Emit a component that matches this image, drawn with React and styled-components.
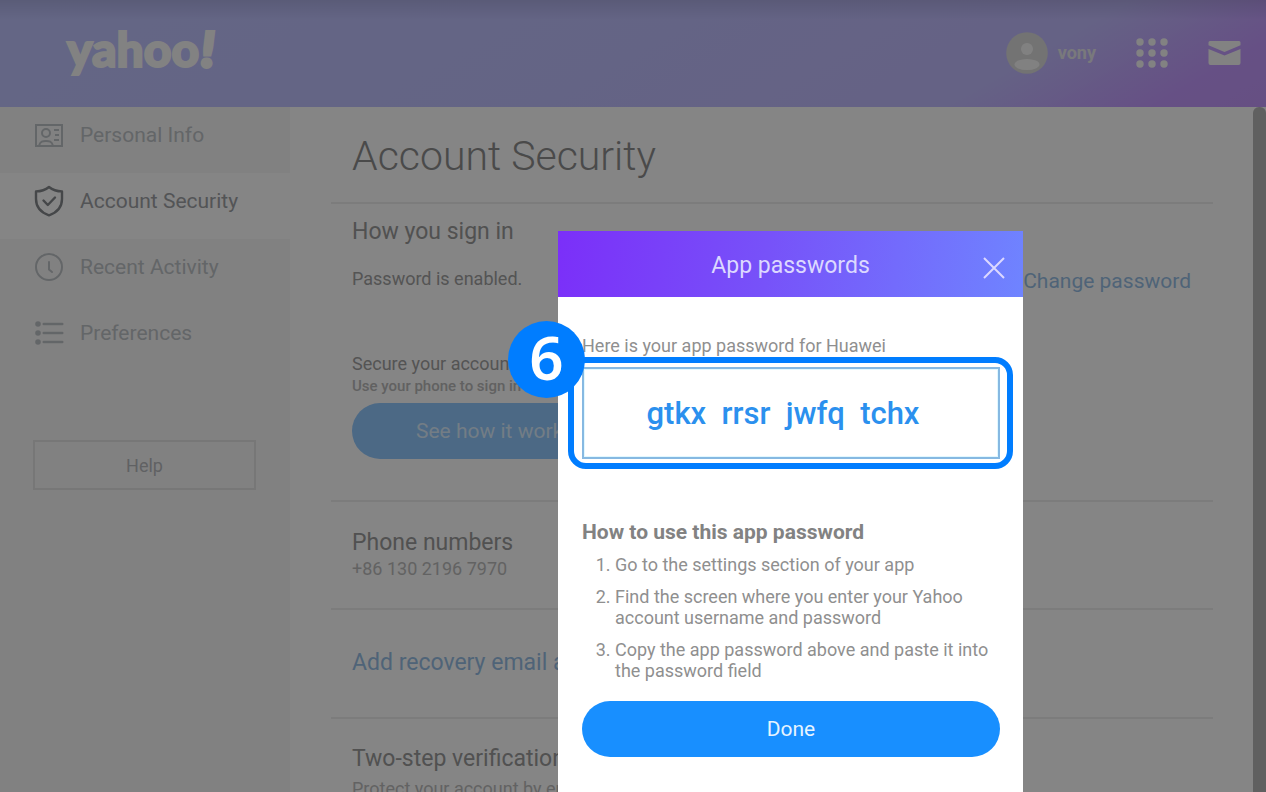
import styled, { createGlobalStyle } from 'styled-components';

const GlobalStyle = createGlobalStyle`
  * {
    box-sizing: border-box;
  }

  body {
    margin: 0;
    height: 100vh;
    overflow: hidden;
    font-family: Roboto, 'Liberation Sans', sans-serif;
    background-color: #ffffff;
  }

  h1, h2, h3, p, ol {
    margin: 0;
    font-weight: 400;
  }

  a {
    text-decoration: none;
  }

  button, input {
    font-family: inherit;
  }
`;

const Page = styled.div`
  height: 100vh;
  display: flex;
  flex-direction: column;
  overflow: hidden;
`;

const Header = styled.header`
  flex: none;
  height: 107px;
  padding: 0 25px 2px 67px;
  display: flex;
  align-items: center;
  justify-content: space-between;
  background:
    linear-gradient(180deg, rgb(0, 0, 0, 0.1) 0px, rgb(0, 0, 0, 0) 20px),
    linear-gradient(150deg, #c0c4ff 0%, #c0c0ff 50%, #c2bcff 78%, #c39aff 92%, #c398fb 100%);
`;

const Logo = styled.a`
  padding-bottom: 8px;
  color: #fafafa;
  font-family: Lato, sans-serif;
  font-size: 48px;
  font-weight: 900;
  line-height: 56px;
  -webkit-text-stroke: 2px #fafafa;

  em {
    margin-left: 2px;
    -webkit-text-stroke: 4px #fafafa;
  }
`;

const HeaderNav = styled.nav`
  display: flex;
  align-items: center;
  gap: 40px;
`;

const Profile = styled.a`
  display: flex;
  align-items: center;
  gap: 10px;
  color: #e8e8ee;
  font-size: 18px;
  font-weight: 700;
`;

const IconLink = styled.a`
  display: flex;
  color: #fafafa;
`;

const Columns = styled.div`
  flex: 1;
  min-height: 0;
  display: flex;
`;

const Sidebar = styled.aside`
  flex: none;
  width: 290px;
  display: flex;
  flex-direction: column;
  background-color: #f8f8f8;
`;

const SideLink = styled.a`
  height: 66px;
  padding: 0 0 10px 34px;
  display: flex;
  align-items: center;
  gap: 16px;
  font-size: 21px;
  color: ${(props) => (props.$active ? '#a0a2a6' : '#bfc3c7')};
  background-color: ${(props) => (props.$active ? '#ffffff' : 'transparent')};

  svg {
    color: ${(props) => (props.$active ? '#85888c' : '#bfc3c7')};
  }
`;

const HelpButton = styled.button`
  height: 50px;
  margin: 69px 34px 0 33px;
  border: 2px solid #e4e4e4;
  background: none;
  color: #b8bbbe;
  font-size: 18px;
`;

const Main = styled.main`
  flex: 1;
  min-width: 0;
  padding: 0 40px 0 41px;
  overflow: hidden;
`;

const Title = styled.h1`
  height: 97px;
  padding-left: 21px;
  border-bottom: 2px solid #eeeeee;
  color: #8e8e8e;
  font-size: 41px;
  font-weight: 300;
  line-height: 98px;
`;

const Section = styled.section`
  min-height: ${(props) => props.$height};
  padding: ${(props) => props.$top} 22px 0 21px;
  border-bottom: 2px solid #eeeeee;
`;

const SectionTitle = styled.h2`
  color: #9b9b9b;
  font-size: 23px;
  line-height: 28px;
`;

const Row = styled.div`
  margin: 21px 0 57px;
  display: flex;
  align-items: flex-start;
  justify-content: space-between;
`;

const Text = styled.p`
  color: ${(props) => (props.$faint ? '#bdbdbd' : '#a2a2a2')};
  font-size: 18px;
  line-height: 24px;
`;

const Note = styled(Text)`
  margin-top: 4px;
`;

const SmallText = styled.p`
  color: #bababa;
  font-size: 15px;
  font-weight: 500;
  line-height: 20px;
`;

const TextLink = styled.a`
  color: #98bfe6;
  font-size: ${(props) => (props.$large ? '23px' : '21px')};
  line-height: 28px;
`;

const HowButton = styled.button`
  height: 56px;
  margin-top: 7px;
  padding: 0 64px;
  border: 0;
  border-radius: 28px;
  background-color: #92c9ff;
  color: #dcefff;
  font-size: 21px;
`;

const ScrollTrack = styled.div`
  flex: none;
  width: 13px;
  border-radius: 6px 6px 0 0;
  background-color: #b9b9b9;
`;

const Overlay = styled.div`
  position: fixed;
  inset: 0;
  padding: 231px 0 0 315px;
  display: flex;
  justify-content: center;
  background-color: rgb(0, 0, 0, 0.48);
`;

const Dialog = styled.div`
  position: relative;
  width: 465px;
  background-color: #ffffff;
`;

const DialogHeader = styled.header`
  height: 66px;
  padding: 4px 18px 0;
  display: grid;
  grid-template-columns: 22px 1fr 22px;
  align-items: center;
  background: linear-gradient(98deg, #7b2ff9 0%, #7752f9 45%, #6f84ff 100%);
  color: #dcd8ff;
`;

const DialogTitle = styled.h2`
  grid-column: 2;
  font-size: 23px;
  line-height: 28px;
  text-align: center;
`;

const CloseButton = styled.button`
  padding: 4px 0 0;
  border: 0;
  display: flex;
  background: none;
  color: inherit;
`;

const DialogBody = styled.div`
  padding: 38px 23px 0 24px;
  color: #8f8f8f;
  font-size: 18px;
  line-height: 21px;
`;

const PasswordInput = styled.input`
  display: block;
  width: 100%;
  height: 92px;
  margin: 11px 0 61px;
  padding: 0 16px 0 0;
  border: 2px solid #86b9e2;
  box-shadow: inset 0 0 0 1px #e2f8ff;
  outline: 0;
  color: #2b90ee;
  font-size: 31px;
  font-weight: 500;
  text-align: center;
`;

const StepsTitle = styled.h3`
  color: #828282;
  font-size: 21px;
  font-weight: 700;
  line-height: 24px;
`;

const Steps = styled.ol`
  margin: 10px 0 20px;
  padding-left: 33px;
  display: flex;
  flex-direction: column;
  gap: 11px;
`;

const DoneButton = styled.button`
  width: 100%;
  height: 56px;
  border: 0;
  border-radius: 28px;
  background-color: #188fff;
  color: #e6f4ff;
  font-size: 21px;
`;

const Highlight = styled.div`
  position: absolute;
  top: 126px;
  left: 10px;
  right: 10px;
  height: 112px;
  border: 6px solid #007dff;
  border-radius: 18px;
  pointer-events: none;
`;

const StepBadge = styled.span`
  position: absolute;
  top: 90px;
  left: -50px;
  width: 77px;
  height: 77px;
  border-radius: 50%;
  display: flex;
  justify-content: center;
  background-color: #007dff;
  color: #ffffff;
  font-family: 'Noto Sans', 'Open Sans', sans-serif;
  font-size: 60px;
  font-weight: 600;
  line-height: 72px;
`;

const CardIcon = () => (
  <svg width='30' height='30' viewBox='0 0 30 30' fill='none' stroke='currentColor' strokeWidth='2'>
    <rect x='2' y='5' width='26' height='21' />
    <circle cx='12' cy='13' r='4' />
    <path d='M5 26c1-5 4-5 7-5s6 0 7 5M20 10h5M21 15h4M20 20h5' />
  </svg>
);

const ShieldIcon = () => (
  <svg width='30' height='32' viewBox='0 0 30 32' fill='none' stroke='currentColor' strokeWidth='2.4' strokeLinejoin='round' strokeLinecap='round'>
    <path d='M15 2c3.500 2.900 8 4.400 13 4.400v7.600c0 8-5 13.500-13 16.300C7 27.500 2 22 2 14V6.400C7 6.400 11.500 4.900 15 2z' />
    <path d='M9.500 15.500l4.300 4.500 7.200-7.500' />
  </svg>
);

const ClockIcon = () => (
  <svg width='30' height='30' viewBox='0 0 30 30' fill='none' stroke='currentColor' strokeWidth='2' strokeLinecap='round'>
    <circle cx='15' cy='15' r='13' />
    <path d='M15 10v7.500l3 2.500' />
  </svg>
);

const ListIcon = () => (
  <svg width='30' height='30' viewBox='0 0 30 30' fill='currentColor'>
    {[6, 15, 24].map((y) => (
      <g key={y}>
        <circle cx='4' cy={y} r='2.800' />
        <rect x='8.500' y={y - 1.2} width='21' height='2.400' rx='1.200' />
      </g>
    ))}
  </svg>
);

const AvatarIcon = () => (
  <svg width='42' height='42' viewBox='0 0 42 42'>
    <circle cx='21' cy='21' r='20.800' fill='#dcdcdc' />
    <circle cx='21' cy='17' r='6' fill='#f8f8f8' />
    <ellipse cx='21' cy='32.500' rx='12.500' ry='5.500' fill='#f8f8f8' />
  </svg>
);

const AppsIcon = () => (
  <svg width='32' height='30' viewBox='0 0 32 30' fill='currentColor'>
    {[4, 15, 26].map((y) =>
      [4, 16, 28].map((x) => <circle key={`${x}-${y}`} cx={x} cy={y} r='3.700' />)
    )}
  </svg>
);

const MailIcon = () => (
  <svg width='33' height='24' viewBox='0 0 33 24' fill='currentColor'>
    <path d='M2 0h29a1.500 1.500 0 0 1 1.500 1.500v2.700L16.500 11 .5 4.200V1.500A1.500 1.500 0 0 1 2 0z' />
    <path d='M.5 8l16 6.500 16-6.500v14a2 2 0 0 1-2 2h-28a2 2 0 0 1-2-2z' />
  </svg>
);

const CloseIcon = () => (
  <svg width='22' height='22' viewBox='0 0 22 22' fill='none' stroke='currentColor' strokeWidth='2'>
    <path d='M1 1l20 20M21 1L1 21' />
  </svg>
);

const App = () => {
  return (
    <>
      <GlobalStyle />
      <Page>
        <Header>
          <Logo href='#home'>
            yahoo<em>!</em>
          </Logo>
          <HeaderNav>
            <Profile href='#profile'>
              <AvatarIcon />
              vony
            </Profile>
            <IconLink href='#apps' aria-label='Apps'>
              <AppsIcon />
            </IconLink>
            <IconLink href='#mail' aria-label='Mail'>
              <MailIcon />
            </IconLink>
          </HeaderNav>
        </Header>
        <Columns>
          <Sidebar>
            <SideLink href='#info'>
              <CardIcon />
              Personal Info
            </SideLink>
            <SideLink href='#security' $active>
              <ShieldIcon />
              Account Security
            </SideLink>
            <SideLink href='#activity'>
              <ClockIcon />
              Recent Activity
            </SideLink>
            <SideLink href='#preferences'>
              <ListIcon />
              Preferences
            </SideLink>
            <HelpButton type='button'>Help</HelpButton>
          </Sidebar>
          <Main>
            <Title>Account Security</Title>
            <Section $height='298px' $top='14px'>
              <SectionTitle>How you sign in</SectionTitle>
              <Row>
                <Text>Password is enabled.</Text>
                <TextLink href='#change'>Change password</TextLink>
              </Row>
              <Text>Secure your account</Text>
              <SmallText>Use your phone to sign in</SmallText>
              <HowButton type='button'>See how it works</HowButton>
            </Section>
            <Section $height='108px' $top='27px'>
              <SectionTitle>Phone numbers</SectionTitle>
              <Text $faint>+86 130 2196 7970</Text>
            </Section>
            <Section $height='109px' $top='39px'>
              <TextLink href='#recovery' $large>
                Add recovery email account
              </TextLink>
            </Section>
            <Section $height='108px' $top='26px'>
              <SectionTitle>Two-step verification</SectionTitle>
              <Note $faint>Protect your account by enabling</Note>
            </Section>
          </Main>
          <ScrollTrack />
        </Columns>
      </Page>
      <Overlay>
        <Dialog role='dialog' aria-labelledby='dialog-title'>
          <DialogHeader>
            <DialogTitle id='dialog-title'>App passwords</DialogTitle>
            <CloseButton type='button' aria-label='Close'>
              <CloseIcon />
            </CloseButton>
          </DialogHeader>
          <DialogBody>
            <label htmlFor='app-password'>
              Here is your app password for Huawei
            </label>
            <PasswordInput
              id='app-password'
              readOnly
              value='gtkx  rrsr  jwfq  tchx'
            />
            <StepsTitle>How to use this app password</StepsTitle>
            <Steps>
              <li>Go to the settings section of your app</li>
              <li>
                Find the screen where you enter your Yahoo account username and
                password
              </li>
              <li>
                Copy the app password above and paste it into the password field
              </li>
            </Steps>
            <DoneButton type='button'>Done</DoneButton>
          </DialogBody>
          <Highlight />
          <StepBadge>6</StepBadge>
        </Dialog>
      </Overlay>
    </>
  );
};

export default App;
